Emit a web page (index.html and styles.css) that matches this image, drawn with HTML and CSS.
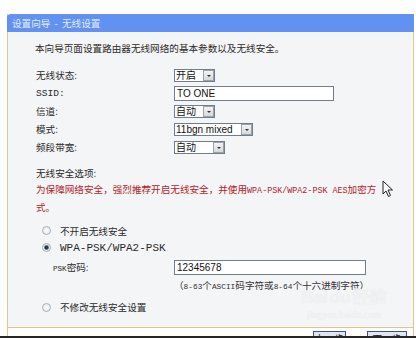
FILE: index.html
```html
<!DOCTYPE html>
<html lang="zh-CN">
<head>
    <meta charset="UTF-8">
    <title>设置向导 - 无线设置</title>
    <link rel="stylesheet" href="styles.css">
</head>
<body>
    <div class="panel">
        <div class="title">设置向导 - 无线设置</div>
        <div class="content">
            <p class="intro">本向导页面设置路由器无线网络的基本参数以及无线安全。</p>

            <div class="form">
                <div class="row">
                    <span class="label">无线状态:</span>
                    <span class="sel w41"><span class="val">开启</span><span class="drop"></span></span>
                </div>
                <div class="row">
                    <span class="label lat">SSID:</span>
                    <span class="txt w160">TO ONE</span>
                </div>
                <div class="row">
                    <span class="label">信道:</span>
                    <span class="sel w41"><span class="val">自动</span><span class="drop"></span></span>
                </div>
                <div class="row">
                    <span class="label">模式:</span>
                    <span class="sel w79"><span class="val">11bgn mixed</span><span class="drop"></span></span>
                </div>
                <div class="row">
                    <span class="label">频段带宽:</span>
                    <span class="sel w51"><span class="val">自动</span><span class="drop"></span></span>
                </div>
            </div>

            <div class="sec-title">无线安全选项:</div>
            <p class="warn">为保障网络安全，强烈推荐开启无线安全，并使用<span class="mono">WPA-PSK/WPA2-PSK AES</span>加密方式。</p>

            <div class="radio first"><span class="dot"></span>不开启无线安全</div>
            <div class="radio"><span class="dot on"></span><span class="mono big">WPA-PSK/WPA2-PSK</span></div>
            <div class="psk">
                <span class="psk-label"><span class="mono">PSK</span>密码:</span>
                <span class="txt w192">12345678</span>
            </div>
            <div class="hint">（<span class="mono">8-63</span>个<span class="mono">ASCII</span>码字符或<span class="mono">8-64</span>个十六进制字符）</div>
            <div class="radio last"><span class="dot"></span>不修改无线安全设置</div>
        </div>
        <div class="footer">
            <span class="btn prev">上一步</span>
            <span class="btn next">下一步</span>
        </div>
    </div>
    <div class="taskbar"></div>

    <div class="watermark">
        <div class="wm-logo">Bai<span class="wm-du">du</span>经验</div>
        <div class="wm-url">jingyan.baidu.com</div>
    </div>

    <svg class="cursor" width="12" height="18" viewBox="0 0 12 18">
        <path d="M1 1 L1 14 L4 11 L6.5 16.5 L8.5 15.5 L6 10 L10.5 10 Z" fill="#fff" stroke="#222" stroke-width="1"/>
    </svg>
</body>
</html>
```

FILE: styles.css
```css
body {
    margin: 0;
    width: 416px;
    height: 338px;
    overflow: hidden;
    position: relative;
    background: #ffffff;
    font-family: "Noto Sans CJK SC", "Noto Sans", sans-serif;
    font-size: 9.6px;
    color: #2a2a2a;
}
.panel {
    margin: 14px 2px 0 7px;
    border-left: 1px solid #e6c28c;
    border-right: 1px solid #e6c28c;
}
.title {
    height: 18px;
    line-height: 18px;
    padding-left: 5px;
    background: #6191f1;
    color: #e4ecff;
    border-radius: 4px 0 0 0;
    margin-left: -1px;
    margin-right: -1px;
    word-spacing: 2px;
}
.content {
    height: 285px;
    padding-top: 10px;
    background: #f4f5f7;
    border-bottom: 1px solid #e6c28c;
}
.intro {
    margin: 0 0 12px 27px;
    line-height: 12px;
}
.form {
    padding-left: 28px;
}
.row {
    display: flex;
    align-items: center;
    height: 18px;
}
.label {
    width: 138px;
}
.lat {
    font-family: "Liberation Mono", monospace;
    font-size: 9.6px;
}
.sel {
    display: inline-flex;
    align-items: center;
    justify-content: space-between;
    box-sizing: border-box;
    height: 13px;
    border: 1px solid #6f7d8c;
    background: #fff;
    padding: 0 0 0 1px;
}
.val {
    font-family: "Liberation Sans", "Noto Sans CJK SC", sans-serif;
    font-size: 10px;
    line-height: 11px;
    color: #111;
}
.drop {
    position: relative;
    width: 11px;
    height: 11px;
    box-sizing: border-box;
    border: 1px solid #9aa3b0;
    background: linear-gradient(#f4f4f4, #d8d8d8);
}
.drop::after {
    content: "";
    position: absolute;
    left: 2.5px;
    top: 4px;
    border-left: 2.5px solid transparent;
    border-right: 2.5px solid transparent;
    border-top: 2.5px solid #333;
}
.w41 { width: 41px; }
.w51 { width: 51px; }
.w79 { width: 79px; }
.txt {
    display: inline-block;
    box-sizing: border-box;
    height: 15px;
    line-height: 13px;
    padding-left: 2px;
    border: 1px solid #6f7d8c;
    background: #fff;
    font-family: "Liberation Sans", sans-serif;
    font-size: 10px;
    color: #111;
}
.w160 { width: 160px; }
.w192 { width: 192px; }
.sec-title {
    margin: 9px 0 0 28px;
    line-height: 16px;
}
.warn {
    margin: 0 0 0 28px;
    width: 346px;
    line-height: 16px;
    color: #b0232a;
}
.mono {
    font-family: "Liberation Mono", monospace;
    font-size: 8.4px;
}
.mono.big {
    font-size: 11px;
}
.radio {
    display: flex;
    align-items: center;
    height: 17px;
    padding-left: 34px;
}
.radio.first {
    margin-top: 7px;
}
.radio.last {
    margin-top: 4px;
    height: 16px;
}
.dot {
    width: 9px;
    height: 9px;
    box-sizing: border-box;
    margin-right: 9px;
    border-radius: 50%;
    border: 1px solid #a9b0bb;
    background: radial-gradient(#ffffff, #dfe2e7);
}
.dot.on {
    background: radial-gradient(#303846 30%, #8e98a8 45%, #e8ebef 60%);
}
.psk {
    display: flex;
    align-items: center;
    height: 18px;
    margin-top: 2px;
    padding-left: 45px;
}
.psk-label {
    width: 121px;
}
.psk .mono {
    font-size: 7.6px;
}
.hint {
    margin: 1px 0 0 166px;
    line-height: 16px;
    color: #333;
}
.hint .mono {
    font-size: 7.8px;
}
.footer {
    position: relative;
    height: 8px;
    background: #ffffff;
    overflow: hidden;
}
.btn {
    position: absolute;
    top: 3px;
    height: 14px;
    box-sizing: border-box;
    border: 1px solid #44527a;
    background: #dfe5f3;
    text-align: center;
    line-height: 12px;
    color: #111;
}
.prev {
    left: 305px;
    width: 33px;
}
.next {
    left: 359px;
    width: 40px;
}
.taskbar {
    height: 2px;
    background: #262626;
}
.watermark {
    position: absolute;
    left: 300px;
    top: 288px;
    width: 88px;
    text-align: center;
    color: #f1f2f4;
    text-shadow: 0 0 1px #e2e3e6;
}
.wm-logo {
    font-family: "Liberation Sans", "Noto Sans CJK SC", sans-serif;
    font-size: 17px;
    font-weight: bold;
    line-height: 20px;
}
.wm-du {
    margin: 0 2px;
}
.wm-url {
    font-family: "Liberation Serif", serif;
    font-size: 10px;
    line-height: 14px;
}
.cursor {
    position: absolute;
    left: 382px;
    top: 180px;
}
```
